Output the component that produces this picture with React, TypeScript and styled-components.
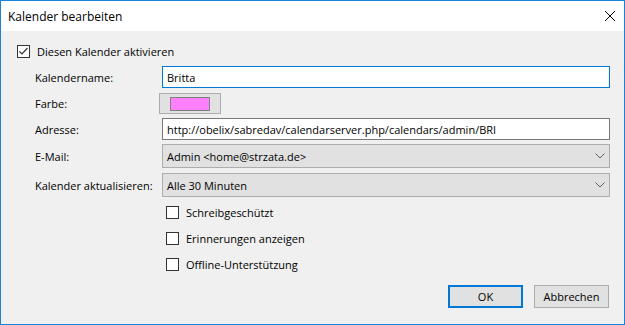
import React from "react";
import styled, { createGlobalStyle } from "styled-components";

const GlobalStyle = createGlobalStyle`
  html, body { margin: 0; padding: 0; background: #f0f0f0; }
  body { font-family: "Open Sans", "Noto Sans", "Liberation Sans", sans-serif; font-size: 11px; color: #000; }
  * { box-sizing: border-box; }
`;

const Window = styled.div`
  width: 625px;
  height: 325px;
  border: 1px solid #1883d7;
  display: flex;
  flex-direction: column;
  background: #f0f0f0;
`;

const TitleBar = styled.div`
  height: 30px;
  background: #fff;
  display: flex;
  align-items: center;
  justify-content: space-between;
  padding: 0 9px 0 7px;
  font-size: 12px;
`;

const CloseButton = styled.div`
  width: 10px;
  height: 10px;
  display: flex;
  margin-top: -1px;
`;

const Body = styled.div`
  flex: 1;
  display: flex;
  flex-direction: column;
  padding: 7px 14px 15px 16px;
`;

const CheckRow = styled.label<{ $indent?: number }>`
  display: flex;
  align-items: center;
  height: 26px;
  gap: 7px;
  margin-left: ${(p) => p.$indent ?? 0}px;
`;

const Box = styled.span`
  width: 13px;
  height: 13px;
  border: 1px solid #333;
  background: #fff;
  display: flex;
  align-items: center;
  justify-content: center;
  flex: none;
`;

const Form = styled.div`
  display: flex;
  flex-direction: column;
  margin-left: 18px;
  margin-top: 2px;
`;

const Row = styled.div<{ $h: number; $mt: number }>`
  display: flex;
  align-items: center;
  height: ${(p) => p.$h}px;
  margin-top: ${(p) => p.$mt}px;
`;

const Label = styled.div`
  width: 127px;
  flex: none;
`;

const TextInput = styled.div<{ $focused?: boolean }>`
  flex: 1;
  height: 100%;
  background: #fff;
  border: 1px solid ${(p) => (p.$focused ? "#0078d7" : "#7a7a7a")};
  display: flex;
  align-items: center;
  padding-left: 4px;
`;

const ColorButton = styled.div`
  width: 62px;
  height: 100%;
  margin-left: -3px;
  background: #e1e1e1;
  border: 1px solid #adadad;
  display: flex;
  align-items: center;
  justify-content: center;
`;

const Swatch = styled.div<{ $color: string }>`
  width: 40px;
  height: 14px;
  background: ${(p) => p.$color};
  border: 1px solid #7f7f7f;
`;

const Select = styled.div`
  flex: 1;
  height: 100%;
  background: #e1e1e1;
  border: 1px solid #adadad;
  display: flex;
  align-items: center;
  justify-content: space-between;
  padding: 0 4px 0 4px;
`;

const Options = styled.div`
  display: flex;
  flex-direction: column;
  margin-left: 149px;
  margin-top: 2px;
`;

const Buttons = styled.div`
  margin-top: auto;
  display: flex;
  justify-content: flex-end;
  gap: 11px;
  padding-right: 1px;
  margin-bottom: 1px;
`;

const Button = styled.div<{ $default?: boolean }>`
  width: 75px;
  height: 23px;
  background: #e1e1e1;
  border: ${(p) => (p.$default ? "2px solid #0078d7" : "1px solid #adadad")};
  display: flex;
  align-items: center;
  justify-content: center;
`;

const Check = () => (
  <svg width="11" height="11" viewBox="0 0 11 11">
    <polyline points="1.5,5.5 4,8 9.5,2" fill="none" stroke="#333" strokeWidth="1.2" />
  </svg>
);

const Chevron = () => (
  <svg width="10" height="6" viewBox="0 0 10 6">
    <polyline points="0.5,0.5 5,5 9.5,0.5" fill="none" stroke="#606060" strokeWidth="1" />
  </svg>
);

const CheckBox = ({ checked, label, indent }: { checked?: boolean; label: string; indent?: number }) => (
  <CheckRow $indent={indent}>
    <Box>{checked && <Check />}</Box>
    <span>{label}</span>
  </CheckRow>
);

export default function App() {
  return (
    <>
      <GlobalStyle />
      <Window>
        <TitleBar>
          <span>Kalender bearbeiten</span>
          <CloseButton>
            <svg width="10" height="10" viewBox="0 0 10 10">
              <path d="M0,0 L10,10 M10,0 L0,10" stroke="#000" strokeWidth="1" />
            </svg>
          </CloseButton>
        </TitleBar>
        <Body>
          <CheckBox checked label="Diesen Kalender aktivieren" />
          <Form>
            <Row $h={22} $mt={0}>
              <Label>Kalendername:</Label>
              <TextInput $focused>Britta</TextInput>
            </Row>
            <Row $h={21} $mt={5}>
              <Label>Farbe:</Label>
              <ColorButton>
                <Swatch $color="#ff80ff" />
              </ColorButton>
            </Row>
            <Row $h={22} $mt={4}>
              <Label>Adresse:</Label>
              <TextInput>http://obelix/sabredav/calendarserver.php/calendars/admin/BRI</TextInput>
            </Row>
            <Row $h={24} $mt={4}>
              <Label>E-Mail:</Label>
              <Select>
                <span>Admin &lt;home@strzata.de&gt;</span>
                <Chevron />
              </Select>
            </Row>
            <Row $h={24} $mt={5}>
              <Label>Kalender aktualisieren:</Label>
              <Select>
                <span>Alle 30 Minuten</span>
                <Chevron />
              </Select>
            </Row>
          </Form>
          <Options>
            <CheckBox label="Schreibgeschützt" />
            <CheckBox label="Erinnerungen anzeigen" />
            <CheckBox label="Offline-Unterstützung" />
          </Options>
          <Buttons>
            <Button $default>OK</Button>
            <Button>Abbrechen</Button>
          </Buttons>
        </Body>
      </Window>
    </>
  );
}
